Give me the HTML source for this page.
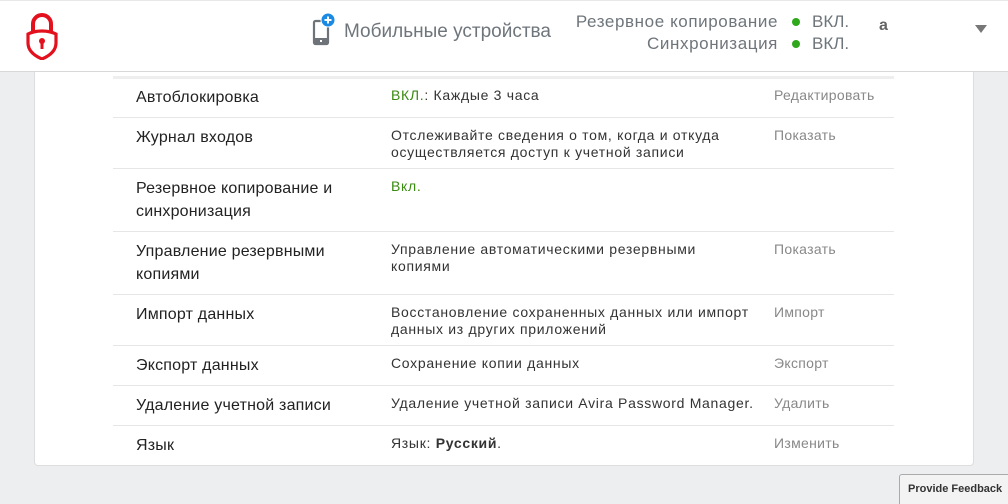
<!DOCTYPE html>
<html><head><meta charset="utf-8"><style>
*{margin:0;padding:0;box-sizing:border-box}
body{width:1008px;height:502px;background:#eceeef;font-family:"Liberation Sans","Noto Sans CJK JP",sans-serif;position:relative;overflow:hidden}
.hdr{position:absolute;left:0;top:0;width:1008px;height:72px;background:#fff;border-bottom:1px solid #d8d8d8;border-top:1px solid #e8e8e8}
.a{position:absolute;white-space:nowrap}
.card{position:absolute;left:34px;top:72px;width:940px;height:394px;background:#fff;border:1px solid #ddd;border-top:none;border-radius:0 0 4px 4px}
.line{position:absolute;left:113px;width:781px;height:1px;background:#e6e6e6}
.lbl{position:absolute;left:136px;font-size:16px;color:#222;line-height:23px;letter-spacing:0.2px}
.desc{position:absolute;left:391px;font-size:14px;color:#333;line-height:17px;letter-spacing:0.7px;white-space:nowrap}
.act{position:absolute;left:774px;font-size:14px;color:#888;letter-spacing:0.3px}
.dot{display:inline-block;width:8px;height:8px;border-radius:50%;background:#2fa81b;margin:0 12px 1px 0}
</style></head><body>
<div class="hdr">
<svg class="a" style="left:24px;top:11px" width="36" height="48" viewBox="0 0 36 48">
<path d="M9 19V12a9 9 0 0 1 18 0v7" fill="none" stroke="#e3101d" stroke-width="4"/>
<path d="M18 19c-6 0-11 1.5-14 3v9c0 8 7 13 14 16 7-3 14-8 14-16v-9c-3-1.5-8-3-14-3z" fill="none" stroke="#e3101d" stroke-width="3.2"/>
<circle cx="18" cy="29" r="3" fill="#e3101d"/><rect x="16.5" y="30" width="3" height="7" fill="#e3101d"/>
</svg>
<svg class="a" style="left:310px;top:11px" width="28" height="34" viewBox="0 0 28 34">
<rect x="4" y="9" width="14" height="23" rx="1.5" fill="none" stroke="#6d7378" stroke-width="2.2"/>
<rect x="4" y="26" width="14" height="6" fill="#6d7378"/><rect x="10" y="28" width="2" height="2" fill="#fff"/>
<circle cx="18" cy="8" r="7" fill="#1a8ae5" stroke="#fff" stroke-width="1"/>
<path d="M18 4.5v7M14.5 8h7" stroke="#fff" stroke-width="2"/>
</svg>
<div class="a" style="left:344px;top:20px;font-size:19px;color:#6e757b">Мобильные устройства</div>
<div class="a" style="left:554px;top:10px;font-size:17px;color:#6e757b;text-align:right;width:224px;line-height:22px;letter-spacing:0.6px">Резервное копирование<br>Синхронизация</div>
<div class="a" style="left:792px;top:10px;font-size:17px;color:#6e757b;line-height:22px"><span class="dot"></span>ВКЛ.<br><span class="dot"></span>ВКЛ.</div>
<div class="a" style="left:879px;top:16px;font-size:16px;font-weight:bold;color:#666">a</div>
<div class="a" style="left:975px;top:24px;width:0;height:0;border-left:6px solid transparent;border-right:6px solid transparent;border-top:8px solid #777"></div>
</div>
<div class="card"></div>
<div class="line" style="top:76px;height:3px;background:#eeeeee"></div>
<div class="line" style="top:117px"></div>
<div class="line" style="top:168px"></div>
<div class="line" style="top:231px"></div>
<div class="line" style="top:294px"></div>
<div class="line" style="top:345px"></div>
<div class="line" style="top:385px"></div>
<div class="line" style="top:425px"></div>

<div class="lbl" style="top:86px">Автоблокировка</div>
<div class="desc" style="top:87px"><span style="color:#3a8a12">ВКЛ.</span>: Каждые 3 часа</div>
<div class="act" style="top:87px">Редактировать</div>

<div class="lbl" style="top:126px">Журнал входов</div>
<div class="desc" style="top:127px">Отслеживайте сведения о том, когда и откуда<br>осуществляется доступ к учетной записи</div>
<div class="act" style="top:127px">Показать</div>

<div class="lbl" style="top:177px">Резервное копирование и<br>синхронизация</div>
<div class="desc" style="top:178px;color:#3a8a12">Вкл.</div>

<div class="lbl" style="top:240px">Управление резервными<br>копиями</div>
<div class="desc" style="top:241px">Управление автоматическими резервными<br>копиями</div>
<div class="act" style="top:241px">Показать</div>

<div class="lbl" style="top:303px">Импорт данных</div>
<div class="desc" style="top:304px">Восстановление сохраненных данных или импорт<br>данных из других приложений</div>
<div class="act" style="top:304px">Импорт</div>

<div class="lbl" style="top:354px">Экспорт данных</div>
<div class="desc" style="top:355px">Сохранение копии данных</div>
<div class="act" style="top:355px">Экспорт</div>

<div class="lbl" style="top:394px">Удаление учетной записи</div>
<div class="desc" style="top:395px">Удаление учетной записи Avira Password Manager.</div>
<div class="act" style="top:395px">Удалить</div>

<div class="lbl" style="top:434px">Язык</div>
<div class="desc" style="top:435px">Язык: <b>Русский</b>.</div>
<div class="act" style="top:435px">Изменить</div>

<div class="a" style="left:899px;top:474px;width:112px;height:30px;background:#f3f3f3;border:1px solid #aaa;border-right:none;border-bottom:none;border-radius:3px 0 0 0;font-size:11px;font-weight:bold;color:#333;padding:8px 0 0 8px">Provide Feedback</div>
</body></html>
